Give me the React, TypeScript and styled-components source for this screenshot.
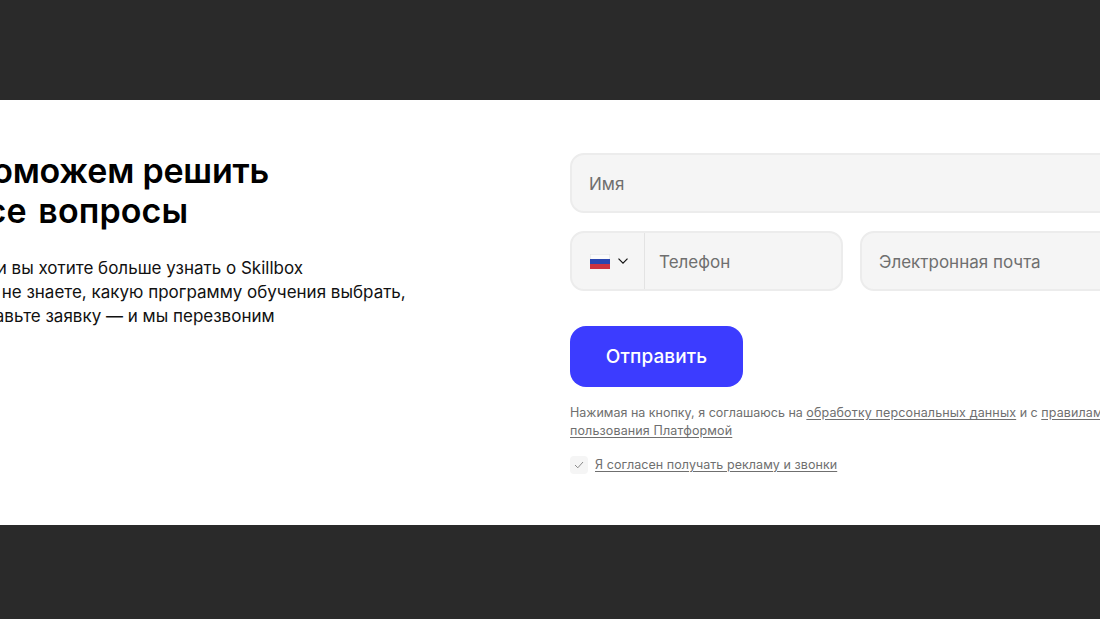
import React from "react";
import styled, { createGlobalStyle } from "styled-components";

const GlobalStyle = createGlobalStyle`
  html, body {
    margin: 0;
    padding: 0;
    height: 100%;
    overflow: hidden;
    background-color: #2a2a2a;
    font-family: Inter, "Noto Sans", "Liberation Sans", sans-serif;
  }
  * {
    box-sizing: border-box;
  }
`;

const Page = styled.div`
  width: 1100px;
  height: 619px;
  padding-top: 100px;
  overflow: hidden;
  background-color: #2a2a2a;
`;

const Section = styled.section`
  height: 425px;
  padding-top: 51px;
  background-color: #ffffff;
  overflow: hidden;
`;

// контент шире окна, поэтому края обрезаны
const Inner = styled.div`
  display: flex;
  width: 1200px;
  margin-left: -33px;
`;

const InfoColumn = styled.div`
  width: 603px;
  flex-shrink: 0;
`;

const Title = styled.h2`
  margin: 0 0 25px;
  font-size: 34px;
  line-height: 40px;
  font-weight: 600;
  letter-spacing: -0.2px;
  color: #000000;
`;

const TitleLine = styled.span`
  letter-spacing: 0.1px;
  word-spacing: 3px;
`;

const Description = styled.p`
  margin: 0;
  font-size: 17px;
  line-height: 24px;
  font-weight: 400;
  color: #111111;
  white-space: pre-line;
`;

const Form = styled.form`
  width: 563px;
  padding-top: 2px;
  flex-shrink: 0;
`;

const Field = styled.div`
  display: flex;
  align-items: center;
  height: 60px;
  padding: 1px 17px 0;
  border: 2px solid #ececec;
  border-radius: 14px;
  background-color: #f5f5f5;
  font-size: 17px;
  color: #6f6f6f;
`;

const FieldRow = styled.div`
  display: grid;
  grid-template-columns: 273px 273px;
  column-gap: 17px;
  margin-top: 18px;
`;

const PhoneField = styled(Field)`
  padding: 0;
`;

const CountrySelect = styled.div`
  display: flex;
  align-items: center;
  gap: 8px;
  width: 73px;
  height: 100%;
  padding-left: 18px;
  border-right: 1px solid #e3e3e3;
  flex-shrink: 0;
`;

const PhoneLabel = styled.span`
  padding: 1px 0 0 14px;
`;

const SubmitButton = styled.button`
  display: block;
  width: 173px;
  height: 61px;
  margin-top: 35px;
  border: none;
  border-radius: 16px;
  background-color: #3c3cff;
  font-family: inherit;
  font-size: 19px;
  font-weight: 500;
  letter-spacing: 0.1px;
  color: #ffffff;
`;

const Legal = styled.p`
  margin: 17px 0 0;
  font-size: 12.5px;
  line-height: 18px;
  color: #6f6f6f;
`;

const LegalLink = styled.span`
  letter-spacing: 0.13px;
  text-decoration: underline;
  text-underline-offset: 2px;
`;

const ConsentLink = styled(LegalLink)`
  letter-spacing: 0.06px;
`;

const Consent = styled.div`
  display: flex;
  align-items: center;
  gap: 7px;
  margin-top: 16px;
  font-size: 12.5px;
  line-height: 18px;
  color: #6f6f6f;
`;

const CheckBox = styled.span`
  display: flex;
  align-items: center;
  justify-content: center;
  width: 18px;
  height: 18px;
  border-radius: 4px;
  background-color: #f5f5f5;
`;

const RussianFlag = () => (
  <svg width="20" height="15" viewBox="0 0 20 15">
    <rect x="0.25" y="0.25" width="19.5" height="5" fill="#fbfbfb" stroke="#e2e2e2" strokeWidth="0.5" />
    <rect y="5" width="20" height="5" fill="#2a46b0" />
    <rect y="10" width="20" height="5" fill="#cc3340" />
  </svg>
);

const Chevron = () => (
  <svg width="10" height="6" viewBox="0 0 10 6" fill="none">
    <path d="M0.5 0.6L5 5.1L9.5 0.6" stroke="#111111" strokeWidth="1.2" />
  </svg>
);

const CheckMark = () => (
  <svg width="10" height="8" viewBox="0 0 10 8" fill="none">
    <path d="M1 4l2.8 2.8L9 1" stroke="#8a8a8a" strokeWidth="1" />
  </svg>
);

const App = () => {
  return (
    <Page>
      <GlobalStyle />
      <Section>
        <Inner>
          <InfoColumn>
            <Title>
              Поможем решить
              <br />
              <TitleLine>все вопросы</TitleLine>
            </Title>
            <Description>
              {"Если вы хотите больше узнать о Skillbox\nили не знаете, какую программу обучения выбрать,\nоставьте заявку — и мы перезвоним"}
            </Description>
          </InfoColumn>
          <Form>
            <Field>Имя</Field>
            <FieldRow>
              <PhoneField>
                <CountrySelect>
                  <RussianFlag />
                  <Chevron />
                </CountrySelect>
                <PhoneLabel>Телефон</PhoneLabel>
              </PhoneField>
              <Field>Электронная почта</Field>
            </FieldRow>
            <SubmitButton type="button">Отправить</SubmitButton>
            <Legal>
              Нажимая на кнопку, я соглашаюсь на <LegalLink>обработку персональных данных</LegalLink> и с{" "}
              <LegalLink>правилами пользования Платформой</LegalLink>
            </Legal>
            <Consent>
              <CheckBox>
                <CheckMark />
              </CheckBox>
              <ConsentLink>Я согласен получать рекламу и звонки</ConsentLink>
            </Consent>
          </Form>
        </Inner>
      </Section>
    </Page>
  );
};

export default App;
